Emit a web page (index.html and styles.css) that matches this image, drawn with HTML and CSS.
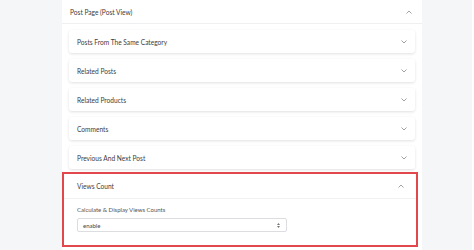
FILE: index.html
```html
<!DOCTYPE html>
<html>
<head>
<link rel="stylesheet" href="styles.css">
</head>
<body>

<div class="page">
  <div class="panel">
    <div class="panel-head">
      <span>Post Page (Post View)</span>
      <svg class="chev" width="6" height="4" viewBox="0 0 6 4"><polyline points="0.5,3.5 3,1 5.5,3.5"/></svg>
    </div>
    <div class="panel-body">
      <div class="item">
        <span>Posts From The Same Category</span>
        <svg class="chev" width="6" height="4" viewBox="0 0 6 4"><polyline points="0.5,0.5 3,3 5.5,0.5"/></svg>
      </div>
      <div class="item">
        <span>Related Posts</span>
        <svg class="chev" width="6" height="4" viewBox="0 0 6 4"><polyline points="0.5,0.5 3,3 5.5,0.5"/></svg>
      </div>
      <div class="item">
        <span>Related Products</span>
        <svg class="chev" width="6" height="4" viewBox="0 0 6 4"><polyline points="0.5,0.5 3,3 5.5,0.5"/></svg>
      </div>
      <div class="item">
        <span>Comments</span>
        <svg class="chev" width="6" height="4" viewBox="0 0 6 4"><polyline points="0.5,0.5 3,3 5.5,0.5"/></svg>
      </div>
      <div class="item">
        <span>Previous And Next Post</span>
        <svg class="chev" width="6" height="4" viewBox="0 0 6 4"><polyline points="0.5,0.5 3,3 5.5,0.5"/></svg>
      </div>

      <div class="item-open">
        <div class="item-open-head">
          <span>Views Count</span>
          <svg class="chev" width="6" height="4" viewBox="0 0 6 4"><polyline points="0.5,3.5 3,1 5.5,3.5"/></svg>
        </div>
        <div class="item-open-body">
          <div class="field-label">Calculate &amp; Display Views Counts</div>
          <div class="fake-select">
            <span>enable</span>
            <svg width="3" height="5" viewBox="0 0 3 5"><polygon points="0,2 1.5,0 3,2"/><polygon points="0,3 1.5,5 3,3"/></svg>
          </div>
        </div>
      </div>
    </div>
  </div>
</div>

</body>
</html>
```

FILE: styles.css
```css
body {
  margin: 0;
  background: #fff;
  font-family: Lato, "Open Sans", sans-serif;
  color: #3c3c3c;
}

.page {
  width: 472px;
  height: 250px;
  background: #f5f6f8;
  padding-left: 62px;
  box-sizing: border-box;
  overflow: hidden;
}

.panel {
  width: 360px;
  height: 250px;
  background: #fff;
}

.panel-head {
  height: 23px;
  border-bottom: 1px solid #eeeff1;
  display: flex;
  align-items: center;
  justify-content: space-between;
  padding: 0 10px 0 8px;
  font-size: 6.6px;
}

.panel-body {
  padding: 6px 7px 0 7px;
}

.chev {
  fill: none;
  stroke: #8a8a8a;
  stroke-width: 0.8;
}

.item {
  height: 23px;
  margin-bottom: 6px;
  background: #fff;
  border-radius: 3px;
  box-shadow: 0 1px 3px rgba(0, 0, 0, 0.12);
  display: flex;
  align-items: center;
  justify-content: space-between;
  padding: 0 8px;
  font-size: 6.6px;
}

/* open item, highlighted with the red frame */
.item-open {
  margin: -3px -3px 0 -7px;
  border: 2px solid #e2474b;
  background: #fff;
}

.item-open-head {
  height: 24px;
  border-bottom: 1px solid #f0f1f3;
  display: flex;
  align-items: center;
  justify-content: space-between;
  padding: 0 12px 0 13px;
  font-size: 6.6px;
}

.item-open-body {
  padding: 6px 13px 13px 13px;
}

.field-label {
  font-size: 6px;
  line-height: 9px;
  color: #555;
  margin-bottom: 4px;
}

.fake-select {
  width: 210px;
  height: 14px;
  box-sizing: border-box;
  border: 1px solid #dcdde0;
  border-radius: 2px;
  display: flex;
  align-items: center;
  justify-content: space-between;
  padding: 0 6px 0 5px;
  font-size: 6px;
  color: #444;
}

.fake-select svg {
  fill: #777;
}
```
